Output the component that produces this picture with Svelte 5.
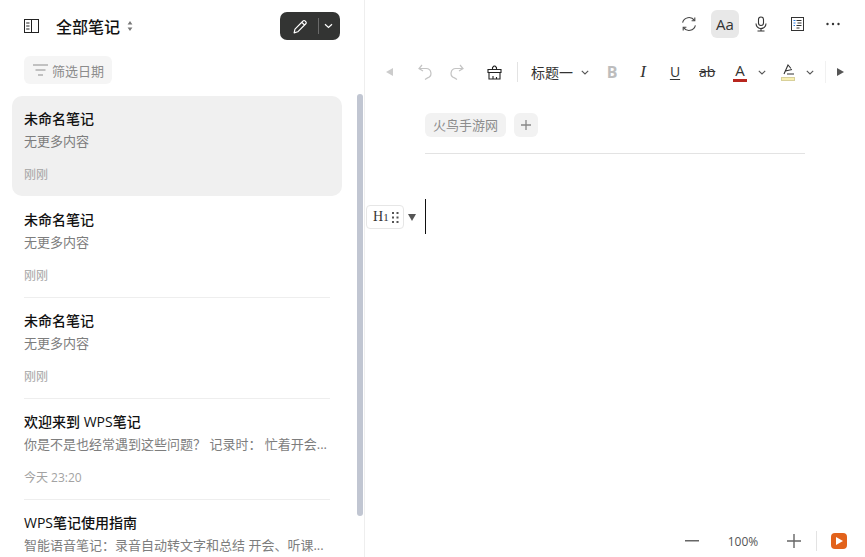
<script lang="ts">
    const notes = [
        { title: "未命名笔记", desc: "无更多内容", time: "刚刚", active: true },
        { title: "未命名笔记", desc: "无更多内容", time: "刚刚" },
        { title: "未命名笔记", desc: "无更多内容", time: "刚刚" },
        { title: "欢迎来到 WPS笔记", desc: "你是不是也经常遇到这些问题？ 记录时： 忙着开会...", time: "今天 23:20" },
        { title: "WPS笔记使用指南", desc: "智能语音笔记：录音自动转文字和总结 开会、听课...", time: "" },
    ];
</script>

<div class="app">
    <aside class="sidebar">
        <header class="side-head">
            <svg class="panel-icon" width="15" height="14" viewBox="0 0 15 14" fill="none" stroke="#222" stroke-width="1">
                <rect x=".5" y=".5" width="14" height="13" />
                <path d="M7.5 .5v13M2.2 4h3.300M2.2 7h3.300M2.2 10h3.300" />
            </svg>
            <span class="side-title">全部笔记</span>
            <svg class="sort-icon" width="6" height="12" viewBox="0 0 6 12" fill="#777">
                <path d="M3 1 5.4 4.6H.6zM3 11 .6 7.4h4.8z" />
            </svg>
            <div class="new-btn">
                <svg width="17" height="17" viewBox="0 0 16 16" fill="none" stroke="#fff" stroke-width="1.1" stroke-linejoin="round">
                    <path d="M2 14l.8-3.6 7.6-7.6a1.3 1.3 0 0 1 1.9 0l.7.7a1.3 1.3 0 0 1 0 1.9L5.4 13zM9.2 4L12 6.800" />
                </svg>
                <span class="new-sep"></span>
                <svg width="9" height="6" viewBox="0 0 9 6" fill="none" stroke="#fff" stroke-width="1.2">
                    <path d="M1 1.2l3.5 3.2L8 1.2" />
                </svg>
            </div>
        </header>
        <div class="filter-row">
            <div class="filter">
                <svg width="15" height="12" viewBox="0 0 15 12" fill="none" stroke="#b0b0b0" stroke-width="1.4">
                    <path d="M0 1h15M2.5 6h10M5 11h5" />
                </svg>
                <span>筛选日期</span>
            </div>
        </div>
        <div class="list">
            {#each notes as note, i}
                <div class="note" class:active={note.active} class:ruled={i > 1}>
                    <div class="note-title">{note.title}</div>
                    <div class="note-desc">{note.desc}</div>
                    <div class="note-time">{note.time}</div>
                </div>
            {/each}
            <div class="scrollbar"></div>
        </div>
    </aside>

    <main class="editor">
        <div class="topbar">
            <button class="top-btn" aria-label="sync">
                <svg width="16" height="16" viewBox="0 0 16 16" fill="none" stroke="#444" stroke-width="1.1">
                    <path d="M1.6 6.6A6.6 6.6 0 0 1 13.4 4.4M14.4 9.4A6.6 6.6 0 0 1 2.6 11.6" />
                    <path d="M13.8 1.6v3.2h-3.2M2.2 14.4v-3.2h3.2" />
                </svg>
            </button>
            <button class="top-btn on">Aa</button>
            <button class="top-btn" aria-label="voice">
                <svg width="12" height="16" viewBox="0 0 12 16" fill="none" stroke="#333" stroke-width="1.1">
                    <rect x="3.5" y="1" width="5" height="8.5" rx="2.5" />
                    <path d="M1 7.5a5 5 0 0 0 10 0M6 12.5V15M2.5 15h7" />
                </svg>
            </button>
            <button class="top-btn" aria-label="outline">
                <svg width="13" height="14" viewBox="0 0 13 14" fill="none" stroke="#333" stroke-width="1">
                    <rect x=".5" y=".5" width="12" height="13" />
                    <path d="M2.5 3.5h2M2.5 6h2M2.5 8.5H4" stroke="#2a7de1" />
                    <path d="M5.5 3.5h5M6.5 6h4M5.500 8.5h5M5.5 11h3" />
                </svg>
            </button>
            <button class="top-btn" aria-label="more">
                <svg width="14" height="4" viewBox="0 0 14 4" fill="#333">
                    <circle cx="1.5" cy="2" r="1.2" /><circle cx="7" cy="2" r="1.2" /><circle cx="12.5" cy="2" r="1.2" />
                </svg>
            </button>
        </div>

        <div class="toolbar">
            <svg class="t-back" width="7" height="8" viewBox="0 0 7 8" fill="#ccc"><path d="M7 0v8L0 4z" /></svg>
            <svg class="t-undo" width="14" height="16" viewBox="0 0 14 16" fill="none" stroke="#c4c4c4" stroke-width="1.2">
                <path d="M4 1 1 4.5 5 7M1.5 4.5H8a4.8 4.8 0 0 1 1.5 9.4L7 15.5" />
            </svg>
            <svg class="t-redo" width="14" height="16" viewBox="0 0 14 16" fill="none" stroke="#c4c4c4" stroke-width="1.2">
                <path d="M10 1l3 3.5L9 7M12.5 4.5H6a4.8 4.8 0 0 0-1.5 9.4L7 15.5" />
            </svg>
            <svg class="t-clean" width="15" height="15" viewBox="0 0 15 15" fill="none" stroke="#222" stroke-width="1.1">
                <path d="M5.5 4.5V2.500L7 1h1l1.500 1.500v2M1 4.500h13v3H1zM2 7.500V14h11V7.500M6 14v-3M9.500 14v-2" />
            </svg>
            <span class="t-sep"></span>
            <span class="t-style">标题一</span>
            <svg class="chev t-style-chev" width="8" height="5" viewBox="0 0 8 5"><path d="M.8.8 4 4l3.2-3.2" /></svg>
            <span class="t-b">B</span>
            <span class="t-i">I</span>
            <span class="t-u">U</span>
            <span class="t-s">ab</span>
            <span class="t-color">A<i class="swatch red"></i></span>
            <svg class="chev t-c-chev" width="8" height="5" viewBox="0 0 8 5"><path d="M.8.8 4 4l3.2-3.2" /></svg>
            <span class="t-mark">
                <svg width="13" height="11" viewBox="0 0 13 11" fill="none" stroke="#333" stroke-width="1.1">
                    <path d="M2 10 6 1l3 3.5M3.5 7 10 5.5M5 10h7" />
                </svg>
                <i class="swatch yellow"></i>
            </span>
            <svg class="chev t-m-chev" width="8" height="5" viewBox="0 0 8 5"><path d="M.8.8 4 4l3.2-3.2" /></svg>
            <span class="t-fade"></span>
            <svg class="t-next" width="7" height="8" viewBox="0 0 7 8" fill="#555"><path d="M0 0v8l7-4z" /></svg>
        </div>

        <div class="doc">
            <div class="tags">
                <span class="tag">火鸟手游网</span>
                <span class="tag-add">
                    <svg width="10" height="10" viewBox="0 0 10 10" stroke="#888" stroke-width="1.3"><path d="M5 0v10M0 5h10" /></svg>
                </span>
            </div>
            <div class="body">
                <div class="block-handle">
                    <span class="h1">H<small>1</small></span>
                    <svg width="7" height="11" viewBox="0 0 7 11" fill="#555">
                        <rect x="0" y="0" width="2" height="2" /><rect x="4.5" y="0" width="2" height="2" />
                        <rect x="0" y="4.5" width="2" height="2" /><rect x="4.5" y="4.5" width="2" height="2" />
                        <rect x="0" y="9" width="2" height="2" /><rect x="4.5" y="9" width="2" height="2" />
                    </svg>
                </div>
                <svg class="block-arrow" width="8" height="7" viewBox="0 0 8 7" fill="#555"><path d="M0 0h8L4 7z" /></svg>
                <div class="cursor"></div>
            </div>
        </div>

        <footer class="zoombar">
            <svg width="14" height="2" viewBox="0 0 14 2" fill="#666"><rect width="14" height="1.5" /></svg>
            <span class="zoom-val">100%</span>
            <svg width="14" height="14" viewBox="0 0 14 14" stroke="#666" stroke-width="1.4"><path d="M7 0v14M0 7h14" /></svg>
            <span class="zoom-sep"></span>
            <span class="play">
                <svg width="7" height="8" viewBox="0 0 7 8" fill="#fff"><path d="M0 0v8l7-4z" /></svg>
            </span>
        </footer>
    </main>
</div>

<style>
    :global(body) {
        margin: 0;
        background: #fff;
        overflow: hidden;
    }

    .app {
        display: flex;
        width: 865px;
        height: 557px;
        overflow: hidden;
        font-family: "Open Sans", "Noto Sans CJK SC", sans-serif;
        color: #1a1a1a;
    }

    .sidebar {
        width: 364px;
        flex-shrink: 0;
        border-right: 1px solid #eeeeee;
        display: flex;
        flex-direction: column;
        overflow: hidden;
    }

    .side-head {
        display: flex;
        align-items: center;
        height: 28px;
        margin-top: 12px;
        padding: 0 24px;
    }

    .panel-icon {
        flex-shrink: 0;
    }

    .side-title {
        margin-left: 17px;
        font-size: 16px;
        font-weight: 500;
        color: #111;
    }

    .sort-icon {
        margin-left: 7px;
    }

    .new-btn {
        margin-left: auto;
        width: 60px;
        height: 28px;
        box-sizing: border-box;
        border-radius: 7px;
        background: #333433;
        display: flex;
        align-items: center;
        padding-left: 12px;
    }

    .new-sep {
        width: 1px;
        height: 16px;
        margin: 0 5px 0 9px;
        background: #6a6a6a;
    }

    .filter-row {
        display: flex;
        padding: 16px 24px 0;
    }

    .filter {
        display: flex;
        align-items: center;
        gap: 4px;
        width: 88px;
        height: 28px;
        box-sizing: border-box;
        padding-left: 9px;
        border-radius: 6px;
        background: #f5f5f5;
        color: #8c8c8c;
        font-size: 13px;
    }

    .list {
        position: relative;
        flex: 1;
        padding: 12px 22px 0 12px;
        overflow: hidden;
    }

    .note {
        height: 100px;
        box-sizing: border-box;
        padding: 12px 12px 0;
        margin-bottom: 1px;
        border-radius: 10px;
    }

    .note.active {
        background: #f0f0f0;
    }

    .note.ruled {
        position: relative;
    }

    .note.ruled::before {
        content: "";
        position: absolute;
        top: -1px;
        left: 12px;
        right: 12px;
        height: 1px;
        background: #eeeeee;
    }

    .note-title {
        font-size: 14px;
        line-height: 22px;
        font-weight: 500;
        color: #111;
    }

    .note-desc {
        font-size: 13px;
        line-height: 22px;
        color: #7d7d7d;
        white-space: nowrap;
    }

    .note-time {
        margin-top: 13px;
        font-size: 12px;
        line-height: 20px;
        color: #a3a3a3;
    }

    .scrollbar {
        position: absolute;
        top: 10px;
        right: 1px;
        width: 6px;
        height: 422px;
        border-radius: 3px;
        background: #c1c6d2;
    }

    .editor {
        flex: 1;
        min-width: 0;
        display: flex;
        flex-direction: column;
    }

    .topbar {
        display: flex;
        justify-content: flex-end;
        gap: 8px;
        padding: 10px 18px 0 0;
    }

    .top-btn {
        width: 28px;
        height: 28px;
        padding: 0;
        border: 0;
        border-radius: 6px;
        background: none;
        display: flex;
        align-items: center;
        justify-content: center;
        font-family: inherit;
        font-size: 15px;
        color: #333;
    }

    .top-btn.on {
        background: #e8e8e8;
    }

    .toolbar {
        display: flex;
        align-items: center;
        height: 28px;
        margin-top: 20px;
        padding-left: 21px;
    }

    .t-undo {
        margin-left: 25px;
    }

    .t-redo {
        margin-left: 18px;
    }

    .t-clean {
        margin-left: 23px;
    }

    .t-sep {
        width: 1px;
        height: 20px;
        margin-left: 15px;
        background: #e3e3e3;
    }

    .t-style {
        margin-left: 13px;
        font-size: 14px;
        color: #333;
        white-space: nowrap;
    }

    .chev {
        fill: none;
        stroke: #555;
        stroke-width: 1.1;
        flex-shrink: 0;
    }

    .t-style-chev {
        margin-left: 8px;
    }

    .t-b,
    .t-i,
    .t-u,
    .t-s {
        width: 16px;
        text-align: center;
        font-size: 14px;
        line-height: 16px;
        color: #333;
    }

    .t-b {
        margin-left: 15px;
        font-size: 16px;
        font-weight: 700;
        color: #bdbdbd;
    }

    .t-i {
        margin-left: 15px;
        font-style: italic;
        font-family: "Liberation Serif", serif;
        font-size: 17px;
    }

    .t-u {
        margin-left: 16px;
        text-decoration: underline;
        text-underline-offset: 2px;
    }

    .t-s {
        margin-left: 16px;
        text-decoration: line-through;
    }

    .t-color {
        margin-left: 18px;
        width: 14px;
        display: flex;
        flex-direction: column;
        align-items: center;
        font-size: 15px;
        line-height: 14px;
        color: #333;
    }

    .swatch {
        display: block;
        width: 14px;
        height: 3px;
    }

    .swatch.red {
        background: #b8261f;
        margin-top: 2px;
    }

    .swatch.yellow {
        background: #f8efb0;
        border: 1px solid #d8d09a;
        box-sizing: border-box;
        height: 4px;
        margin-top: 2px;
    }

    .t-c-chev {
        margin-left: 11px;
    }

    .t-mark {
        margin-left: 15px;
        width: 14px;
        display: flex;
        flex-direction: column;
        align-items: center;
    }

    .t-m-chev {
        margin-left: 11px;
    }

    .t-fade {
        width: 1px;
        height: 22px;
        margin-left: 11px;
        background: #f1f1f1;
    }

    .t-next {
        margin-left: 11px;
    }

    .doc {
        flex: 1;
        padding: 27px 60px 0;
    }

    .tags {
        display: flex;
        gap: 8px;
        padding-bottom: 16px;
        border-bottom: 1px solid #e3e3e3;
    }

    .tag {
        height: 24px;
        padding: 0 8px;
        border-radius: 6px;
        background: #f2f2f2;
        color: #8c8c8c;
        font-size: 13px;
        line-height: 24px;
    }

    .tag-add {
        width: 24px;
        height: 24px;
        border-radius: 6px;
        background: #f2f2f2;
        display: flex;
        align-items: center;
        justify-content: center;
    }

    .body {
        position: relative;
        padding-top: 45px;
    }

    .cursor {
        width: 1px;
        height: 35px;
        background: #111;
    }

    .block-handle {
        position: absolute;
        top: 51px;
        left: -59px;
        width: 38px;
        height: 24px;
        box-sizing: border-box;
        border: 1px solid #e6e6e6;
        border-radius: 4px;
        display: flex;
        align-items: center;
        gap: 3px;
        padding-left: 6px;
    }

    .h1 {
        font-family: "Liberation Serif", serif;
        font-size: 14px;
        color: #333;
    }

    .h1 small {
        font-size: 11px;
    }

    .block-arrow {
        position: absolute;
        top: 60px;
        left: -17px;
    }

    .zoombar {
        display: flex;
        align-items: center;
        height: 32px;
        padding: 0 18px 0 320px;
    }

    .zoom-val {
        width: 88px;
        text-align: center;
        font-size: 12px;
        color: #555;
    }

    .zoom-sep {
        width: 1px;
        height: 20px;
        margin: 0 14px 0 15px;
        background: #e3e3e3;
    }

    .play {
        width: 16px;
        height: 16px;
        border-radius: 4px;
        background: #e2621b;
        display: flex;
        align-items: center;
        justify-content: center;
    }
</style>
